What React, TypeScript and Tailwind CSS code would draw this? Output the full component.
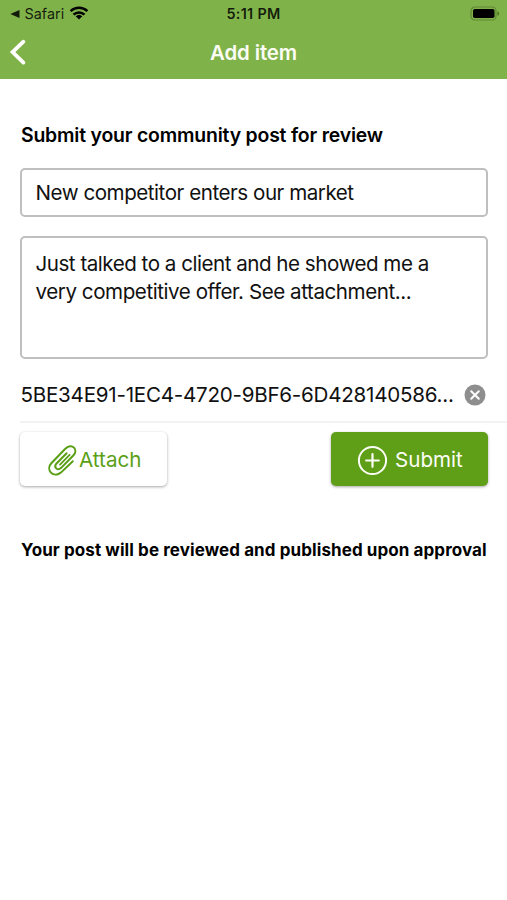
import React from "react";

function StatusBar() {
  return (
    <div className="grid h-[27px] grid-cols-3 items-center text-black/85">
      <div className="flex h-[27px] items-center pl-[10px]">
        <svg width="10" height="8" viewBox="0 0 10 8" fill="currentColor">
          <path d="M0.3 4 L9.5 0 V8 Z" />
        </svg>
        <span className="mt-px ml-[4.5px] text-[14.4px] leading-none">Safari</span>
        <svg className="ml-[5px] -mt-[2px] text-black" width="20" height="14" viewBox="0 0 20 14" fill="none" stroke="currentColor" strokeWidth="2.5">
          <path d="M1.6 5.2 A12.2 12.2 0 0 1 18.4 5.2" />
          <path d="M4.5 8.6 A8 8 0 0 1 15.5 8.6" />
          <path d="M10 13.6 L6.7 10.3 A4.8 4.8 0 0 1 13.3 10.3 Z" fill="currentColor" stroke="none" />
        </svg>
      </div>
      <div className="mt-px text-center text-[14.4px] leading-none font-semibold tracking-[0.3px]">5:11 PM</div>
      <div className="flex justify-end pr-[7px]">
        <svg width="30" height="15" viewBox="0 0 30 15" fill="none">
          <rect x="1" y="1" width="25" height="13" rx="3.8" stroke="#5f8834" strokeWidth="1.2" />
          <rect x="3" y="3" width="21.5" height="9" rx="1.8" fill="#000" />
          <path d="M27.4 5.2 C29.8 6 29.8 9 27.4 9.8 Z" fill="#4f7424" />
        </svg>
      </div>
    </div>
  );
}

export default function App() {
  return (
    <div className="flex min-h-[900px] w-[507px] flex-col bg-white font-['Inter',sans-serif] text-[#111]">
      <header className="h-[79px] bg-[#80b24a]">
        <StatusBar />
        <div className="grid h-[50px] grid-cols-[40px_1fr_40px] items-center">
          <svg className="-mt-px ml-[9px]" width="18" height="28" viewBox="0 0 18 28" fill="none" stroke="#fff" strokeWidth="3.8" strokeLinecap="round">
            <path d="M14.4 3.7 L3.6 14.1 L14.4 24.6" />
          </svg>
          <h1 className="mt-[2px] text-center text-[20.4px] leading-none font-semibold tracking-[-0.1px] text-[#fbfdf5]">Add item</h1>
        </div>
      </header>

      <main className="flex flex-col pl-[20px]">
        <h2 className="mt-[44px] pl-px text-[19.4px] leading-6 font-semibold tracking-[-0.18px] whitespace-nowrap text-black">Submit your community post for review</h2>
        <div className="mt-[21px] mr-[19px] flex h-[49px] items-center rounded-[5px] border-2 border-[#bfbfbf] pt-[2px] pl-[13.5px] text-[20.6px] tracking-[-0.47px] whitespace-nowrap">
          New competitor enters our market
        </div>
        <div className="mt-[19px] mr-[19px] h-[123px] rounded-[5px] border-2 border-[#bfbfbf] pt-[12px] pl-[13.5px] text-[20.6px] leading-7 tracking-[-0.49px] whitespace-nowrap">
          <p>Just talked to a client and he showed me a</p>
          <p className="tracking-[-0.45px]">very competitive offer. See attachment...</p>
        </div>

        <div className="flex h-[64px] items-center justify-between border-b-2 border-[#f3f3f3] pt-[9px] pr-[21px] pl-[0.5px]">
          <span className="mt-[2px] text-[20.6px] tracking-[-0.25px] whitespace-nowrap">5BE34E91-1EC4-4720-9BF6-6D428140586...</span>
          <svg className="shrink-0" width="22" height="22" viewBox="0 0 22 22">
            <circle cx="11" cy="11" r="10.5" fill="#8e8e8e" />
            <path d="M7.2 7.2 L14.8 14.8 M14.8 7.2 L7.2 14.8" stroke="#fff" strokeWidth="2" strokeLinecap="round" />
          </svg>
        </div>

        <div className="mt-[9px] mr-[19px] flex justify-between text-[20.6px]">
          <button className="flex h-[54px] w-[147px] items-center rounded-[5px] bg-white pl-[28px] text-[#5b9f17] shadow-[0_1px_3px_rgba(0,0,0,0.35)]">
            <svg className="mt-[3px]" width="29" height="33" viewBox="0 0 29 33" fill="none" stroke="currentColor" strokeWidth="2" strokeLinecap="round" strokeLinejoin="round">
              <path d="M24.8 17.2 L12.9 28.6 C9.8 31.4 5.3 31.2 2.9 28.6 C0.4 25.8 0.8 21.9 3.3 19.2 L17.3 4.7 C20 1.8 23.8 1.3 26 3.6 C28.2 5.9 27.6 9.1 25.3 11.5 L12.9 24.1 C9.6 27 5.3 23.4 8.3 19.7 L18.6 9.3" />
              <path d="M12 20.6 L21.6 10.8" strokeWidth="1.8" />
            </svg>
            <span className="mt-[2px] ml-[2px]">Attach</span>
          </button>
          <button className="flex h-[54px] w-[157px] items-center rounded-[5px] bg-[#5f9f17] pl-[26px] text-[#fbfdf5] shadow-[0_1px_3px_rgba(0,0,0,0.35)]">
            <svg className="mt-[3px]" width="31" height="31" viewBox="0 0 31 31" fill="none" stroke="currentColor" strokeWidth="2">
              <circle cx="15.5" cy="15.5" r="13.6" />
              <path d="M15.5 9.2 V21.8 M9.2 15.5 H21.8" strokeWidth="2.2" strokeLinecap="round" />
            </svg>
            <span className="mt-[2px] ml-[7px]">Submit</span>
          </button>
        </div>

        <p className="mt-[52px] pl-px text-[17px] leading-6 font-bold tracking-[0.09px] whitespace-nowrap text-black">Your post will be reviewed and published upon approval</p>
      </main>
    </div>
  );
}
